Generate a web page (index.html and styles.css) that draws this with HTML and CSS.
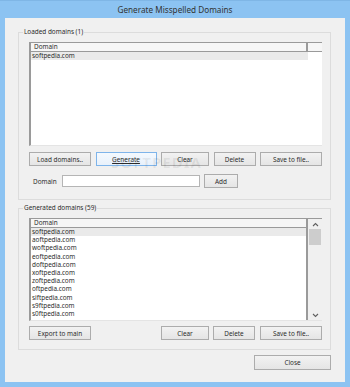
FILE: index.html
```html
<!DOCTYPE html>
<html lang="en">
<head>
  <meta charset="UTF-8">
  <meta name="viewport" content="width=device-width, initial-scale=1.0">
  <title>Generate Misspelled Domains</title>
  <link rel="stylesheet" href="styles.css">
</head>
<body>

<div class="window">
  <div class="titlebar">Generate Misspelled Domains</div>

  <div class="client">

    <fieldset class="group">
      <legend>Loaded domains (1)</legend>

      <div class="listview list-loaded">
        <div class="lv-main">
          <div class="lv-header">
            <span class="lv-col">Domain</span>
            <span class="lv-filler"></span>
          </div>
          <div class="lv-rows">
            <div class="lv-row selected">softpedia.com</div>
          </div>
        </div>
      </div>

      <div class="button-row">
        <button class="btn w-62">Load domains..</button>
        <button class="btn w-61 focused"><u>Generate</u></button>
        <button class="btn w-48">Clear</button>
        <button class="btn w-42">Delete</button>
        <button class="btn w-62">Save to file..</button>
      </div>

      <div class="add-row">
        <label for="domain">Domain</label>
        <input type="text" id="domain">
        <button class="btn btn-add">Add</button>
      </div>

      <span class="watermark">SOFTPEDIA</span>
    </fieldset>

    <fieldset class="group group-generated">
      <legend>Generated domains (59)</legend>

      <div class="listview list-generated">
        <div class="lv-main">
          <div class="lv-header">
            <span class="lv-col">Domain</span>
          </div>
          <div class="lv-rows">
            <div class="lv-row selected">softpedia.com</div>
            <div class="lv-row">aoftpedia.com</div>
            <div class="lv-row">woftpedia.com</div>
            <div class="lv-row">eoftpedia.com</div>
            <div class="lv-row">doftpedia.com</div>
            <div class="lv-row">xoftpedia.com</div>
            <div class="lv-row">zoftpedia.com</div>
            <div class="lv-row">oftpedia.com</div>
            <div class="lv-row">siftpedia.com</div>
            <div class="lv-row">s9ftpedia.com</div>
            <div class="lv-row">s0ftpedia.com</div>
          </div>
        </div>
        <div class="scrollbar">
          <div class="sb-arrow">
            <svg width="7" height="5" viewBox="0 0 7 5"><path d="M1 4 L3.5 1.5 L6 4" fill="none" stroke="#606060" stroke-width="1.1"/></svg>
          </div>
          <div class="sb-track">
            <div class="sb-thumb"></div>
          </div>
          <div class="sb-arrow">
            <svg width="7" height="5" viewBox="0 0 7 5"><path d="M1 1 L3.5 3.5 L6 1" fill="none" stroke="#606060" stroke-width="1.1"/></svg>
          </div>
        </div>
      </div>

      <div class="button-row">
        <button class="btn w-62">Export to main</button>
        <span class="spacer"></span>
        <button class="btn w-48">Clear</button>
        <button class="btn w-42 ml-4">Delete</button>
        <button class="btn w-62 ml-5">Save to file..</button>
      </div>
    </fieldset>

    <div class="footer">
      <button class="btn btn-close">Close</button>
    </div>

  </div>
</div>

</body>
</html>
```

FILE: styles.css
```css
:root {
  --frame-blue: #8cc3f2;
  --face: #f0f0f0;
  --group-line: #dcdcdc;
  --btn-border: #acacac;
  --text: #2c2c2c;
  --list-line: #9a9a9a;
}
body {
  margin: 0;
  padding: 0;
  font-family: 'Noto Sans', 'Open Sans', sans-serif;
  font-size: 6.4px;
  color: var(--text);
}
.window {
  width: 350px;
  height: 387px;
  background-color: var(--frame-blue);
  display: flex;
  flex-direction: column;
  box-sizing: border-box;
  border-top: 1px solid #7fb6e6;
}
.titlebar {
  height: 17px;
  line-height: 17px;
  text-align: center;
  font-size: 8.2px;
  color: #333333;
}
.client {
  flex: 1;
  margin: 0 5px 5px 5px;
  background-color: var(--face);
  padding: 9px 14px 0 13px;
  display: flex;
  flex-direction: column;
}
.group {
  position: relative;
  margin: 0;
  padding: 5px 8px 11px 10px;
  border: 1px solid var(--group-line);
  min-width: 0;
}
.group legend {
  padding: 0 1px;
  margin-left: -6px;
  line-height: 10px;
}
.group-generated {
  margin-top: 3px;
  padding-bottom: 9px;
}

/* list views */
.listview {
  display: flex;
  background: #ffffff;
  border-left: 2px solid var(--list-line);
  border-bottom: 1px solid #e4e4e4;
  box-sizing: border-box;
}
.list-loaded {
  height: 104px;
}
.list-generated {
  height: 103px;
}
.lv-main {
  flex: 1;
  min-width: 0;
  overflow: hidden;
}
.lv-header {
  display: flex;
  height: 10px;
  box-sizing: border-box;
  border-top: 1px solid var(--list-line);
  border-bottom: 1px solid var(--list-line);
  background: #f6f6f6;
}
.lv-col {
  width: 277px;
  line-height: 8px;
  padding-left: 3px;
  box-sizing: border-box;
  border-right: 2px solid var(--list-line);
}
.list-generated .lv-col {
  width: auto;
  flex: 1;
  border-right: none;
}
.lv-filler {
  flex: 1;
}
.lv-row {
  width: 277px;
  height: 8.2px;
  line-height: 8.2px;
  padding-left: 1px;
  box-sizing: border-box;
  white-space: nowrap;
}
.lv-row.selected {
  background: #eaeaea;
}

/* scrollbar */
.scrollbar {
  width: 14px;
  display: flex;
  flex-direction: column;
  border-left: 2px solid var(--list-line);
  border-top: 1px solid var(--list-line);
  background: #f0f0f0;
}
.sb-arrow {
  height: 10px;
  display: flex;
  align-items: center;
  justify-content: center;
}
.sb-track {
  flex: 1;
  padding: 0 1px;
}
.sb-thumb {
  height: 16px;
  background: #cdcdcd;
}

/* buttons */
.btn {
  height: 14px;
  padding: 0;
  border: 1px solid var(--btn-border);
  background: linear-gradient(#f2f2f2, #e5e5e5);
  font-family: inherit;
  font-size: 6.4px;
  color: var(--text);
  box-sizing: border-box;
}
.btn.focused {
  border-color: #7eb4ea;
  background: linear-gradient(#f4f9fe, #e8f1fb);
}
.button-row {
  display: flex;
  justify-content: space-between;
  margin-top: 6px;
}
.group-generated .button-row {
  justify-content: flex-start;
  margin-top: 5px;
}
.spacer {
  flex: 1;
}
.ml-4 { margin-left: 4px; }
.ml-5 { margin-left: 5px; }
.w-62 { width: 62px; }
.w-61 { width: 61px; }
.w-48 { width: 48px; }
.w-42 { width: 42px; }

.add-row {
  display: flex;
  align-items: center;
  margin-top: 8px;
}
.add-row label {
  width: 33px;
  padding-left: 4px;
  box-sizing: border-box;
}
.add-row input {
  width: 138px;
  height: 12px;
  margin: 0;
  padding: 0;
  border: 1px solid #b5b5b5;
  box-sizing: border-box;
  background: #ffffff;
}
.btn-add {
  width: 34px;
  margin-left: 4px;
}

.footer {
  display: flex;
  justify-content: flex-end;
  margin-top: 5px;
}
.btn-close {
  width: 77px;
  height: 15px;
}

.watermark {
  position: absolute;
  left: 92px;
  top: 115px;
  font-size: 15px;
  font-weight: bold;
  letter-spacing: 1px;
  color: rgba(0, 0, 0, 0.07);
}
```
